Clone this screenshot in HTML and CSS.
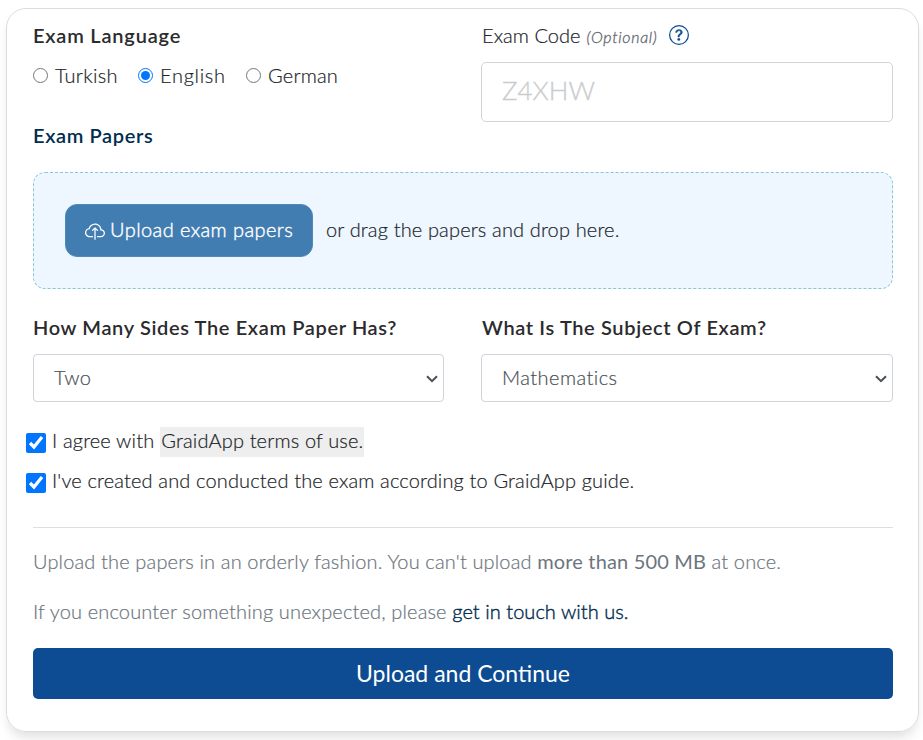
FILE: index.html
```html
<!DOCTYPE html>
<html lang="en">
<head>
<meta charset="utf-8">
<title>Upload exam papers</title>
<link rel="stylesheet" href="styles.css">
</head>
<body>
<form class="card">
  <div class="columns">
    <div>
      <div class="label label-language">Exam Language</div>
      <div class="radios">
        <label class="radio"><input type="radio" name="lang"><span>Turkish</span></label>
        <label class="radio radio-english"><input type="radio" name="lang" checked><span>English</span></label>
        <label class="radio radio-german"><input type="radio" name="lang"><span>German</span></label>
      </div>
      <div class="label label-papers">Exam Papers</div>
    </div>
    <div>
      <div class="code-label">
        <span>Exam Code</span>
        <em class="optional">(Optional)</em>
        <svg class="help" viewBox="0 0 16 16" fill="currentColor"><path d="M8 15A7 7 0 1 1 8 1a7 7 0 0 1 0 14zm0 1A8 8 0 1 0 8 0a8 8 0 0 0 0 16z"/><path stroke="currentColor" stroke-width=".3" d="M5.255 5.786a.237.237 0 0 0 .241.247h.825c.138 0 .248-.113.266-.25.09-.656.54-1.134 1.342-1.134.686 0 1.314.343 1.314 1.168 0 .635-.374.927-.965 1.371-.673.489-1.206 1.06-1.168 1.987l.003.217a.25.25 0 0 0 .25.246h.811a.25.25 0 0 0 .25-.25v-.105c0-.718.273-.927 1.01-1.486.609-.463 1.244-.977 1.244-2.056 0-1.511-1.276-2.241-2.673-2.241-1.267 0-2.655.59-2.75 2.286zm1.557 5.763c0 .533.425.927 1.01.927.609 0 1.028-.394 1.028-.927 0-.552-.42-.94-1.029-.94-.584 0-1.009.388-1.009.94z"/></svg>
      </div>
      <input class="code" type="text" placeholder="Z4XHW">
    </div>
  </div>

  <div class="dropzone">
    <button class="upload" type="button">
      <svg class="cloud" viewBox="0 0 16 16" fill="currentColor"><path fill-rule="evenodd" d="M7.646 5.146a.5.5 0 0 1 .708 0l2 2a.5.5 0 0 1-.708.708L8.5 6.707V14.5a.5.5 0 0 1-1 0V6.707L6.354 7.854a.5.5 0 1 1-.708-.708l2-2z"/><path d="M4.406 3.342A5.53 5.53 0 0 1 8 2c2.69 0 4.923 2 5.166 4.579C14.758 6.804 16 8.137 16 9.773 16 11.569 14.502 13 12.687 13H10a.5.5 0 0 1 0-1h2.688C13.979 12 15 10.988 15 9.773c0-1.216-1.02-2.228-2.313-2.228h-.5v-.5C12.188 4.825 10.328 3 8 3a4.53 4.53 0 0 0-2.941 1.1c-.757.652-1.153 1.438-1.153 2.055v.448l-.445.049C2.064 6.805 1 7.952 1 9.318 1 10.785 2.23 12 3.781 12H6a.5.5 0 0 1 0 1H3.781C1.708 13 0 11.366 0 9.318c0-1.763 1.266-3.223 2.942-3.593.143-.863.698-1.723 1.464-2.383z"/></svg>
      <span class="upload-text">Upload exam papers</span>
    </button>
    <span class="hint">or drag the papers and drop here.</span>
  </div>

  <div class="columns selects">
    <div>
      <div class="label">How Many Sides The Exam Paper Has?</div>
      <div class="select-box">
        <select class="select"><option>Two</option></select>
        <svg class="arrow" viewBox="0 0 12 8"><path d="M1 1.2l5 5 5-5"/></svg>
      </div>
    </div>
    <div>
      <div class="label label-subject">What Is The Subject Of Exam?</div>
      <div class="select-box">
        <select class="select"><option>Mathematics</option></select>
        <svg class="arrow" viewBox="0 0 12 8"><path d="M1 1.2l5 5 5-5"/></svg>
      </div>
    </div>
  </div>

  <label class="check"><input type="checkbox" checked><span>I agree with</span><span class="terms">GraidApp terms of use.</span></label>
  <label class="check check-guide"><input type="checkbox" checked><span>I've created and conducted the exam according to GraidApp guide.</span></label>

  <hr>
  <p class="note">Upload the papers in an orderly fashion. You can't upload <b>more than 500 MB</b> at once.</p>
  <p class="note note-contact">If you encounter something unexpected, please <a>get in touch with us.</a></p>
  <button class="submit" type="button">Upload and Continue</button>
</form>
</body>
</html>
```
FILE: styles.css
```css
* { box-sizing: border-box; }

body {
  margin: 0;
  padding: 8px 4px 0 6px;
  height: 740px;
  overflow: hidden;
  background: #fff;
  color: #212529;
  font: 300 20px/30px Lato, sans-serif;
  letter-spacing: 0.15px;
  -webkit-text-stroke: 0.2px;
}

.card {
  width: 913px;
  height: 724px;
  padding: 11px 25px 0 26px;
  border: 1px solid #dbdcdd;
  border-radius: 20px;
  box-shadow: 0 8px 12px -3px rgba(0, 0, 0, 0.13);
}

.columns {
  display: grid;
  grid-template-columns: 411px 412px;
  column-gap: 37px;
}

.label {
  color: #2b2b2e;
  font-weight: 600;
  letter-spacing: 0.64px;
  white-space: nowrap;
  -webkit-text-stroke: 0;
}
.label-language { letter-spacing: 0.8px; }
.label-subject { padding-left: 1px; letter-spacing: 0.64px; }
.label-papers { margin-top: 30px; color: #012d4e; }

.radios { display: flex; margin-top: 10px; }
.radio { display: flex; align-items: center; gap: 7px; width: 105px; letter-spacing: 0.3px; }
.radio-english { width: 108px; letter-spacing: 0.7px; }
.radio-german { letter-spacing: 0.2px; }
.radio input { width: 15px; height: 15px; margin: 1px 0 0; }

.code-label { display: flex; align-items: center; height: 30px; padding-left: 1px; letter-spacing: 0.05px; }
.optional { margin: 3px 0 0 6px; color: #5f666d; font-size: 16px; font-weight: 300; letter-spacing: 0.68px; -webkit-text-stroke: 0.3px; }
.help { width: 20px; height: 20px; margin: -1px 0 0 11px; color: #0d4c92; }

.code {
  display: block;
  width: 412px;
  height: 60px;
  margin-top: 12px;
  padding: 0 20px 4px 20px;
  border: 1px solid #ced4da;
  border-radius: 5px;
  font: 300 26px Lato, sans-serif;
  -webkit-text-stroke: 0.3px #c9cccf;
}
.code::placeholder { color: #c9cccf; opacity: 1; }

.dropzone {
  display: flex;
  align-items: center;
  height: 117px;
  margin-top: 22px;
  padding-left: 31px;
  border: 1px dashed #8bc5d9;
  border-radius: 12px;
  background: #eef7ff;
}
.upload {
  display: flex;
  align-items: center;
  width: 248px;
  height: 53px;
  padding: 0 19px;
  gap: 5px;
  border: 1px solid #4f89b9;
  border-radius: 12px;
  background: #427db2;
  color: #fff;
  font: 300 20px/30px Lato, sans-serif;
  letter-spacing: 0.42px;
  white-space: nowrap;
  -webkit-text-stroke: 0.4px;
}
.upload-text { padding-bottom: 3px; }
.cloud { flex: none; width: 20px; height: 20px; }
.hint { margin-left: 13px; padding-bottom: 3px; }

.selects { margin-top: 23px; }
.select-box { position: relative; margin-top: 12px; }
.select {
  display: block;
  appearance: none;
  width: 100%;
  height: 48px;
  padding: 0 20px 2px 20px;
  border: 1px solid #ced4da;
  border-radius: 4px;
  background: #fff;
  color: #495057;
  font: 300 20px/30px Lato, sans-serif;
  letter-spacing: 0.45px;
  -webkit-text-stroke: 0.2px;
}
.arrow {
  position: absolute;
  right: 6px;
  top: 21px;
  width: 12px;
  height: 8px;
  fill: none;
  stroke: #495057;
  stroke-width: 2;
  pointer-events: none;
}

.check { display: flex; height: 30px; margin: 25px 0 0 -7px; line-height: 27px; white-space: nowrap; }
.check input { width: 20px; height: 20px; margin: 6px 6px 0 0; }
.check-guide { margin-top: 10px; }
.terms { margin-left: 6px; padding: 0 1px; background: #eee; }

hr { height: 1px; margin: 30px 0 0; border: 0; background: #dfdfdf; }
.note { margin: 20px 0 0; color: #6c757d; letter-spacing: 0.15px; white-space: nowrap; }
hr + .note { margin-top: 18px; }
.note b { font-weight: 400; -webkit-text-stroke: 0; }
.note a { color: #012d4e; letter-spacing: 0.05px; -webkit-text-stroke: 0.4px; }

.submit {
  display: block;
  width: 860px;
  height: 51px;
  margin-top: 22px;
  padding: 0 0 2px;
  border: 0;
  border-radius: 5px;
  background: #0d4c92;
  color: #fff;
  font: 400 23px/34px Lato, sans-serif;
  -webkit-text-stroke: 0;
}
```
